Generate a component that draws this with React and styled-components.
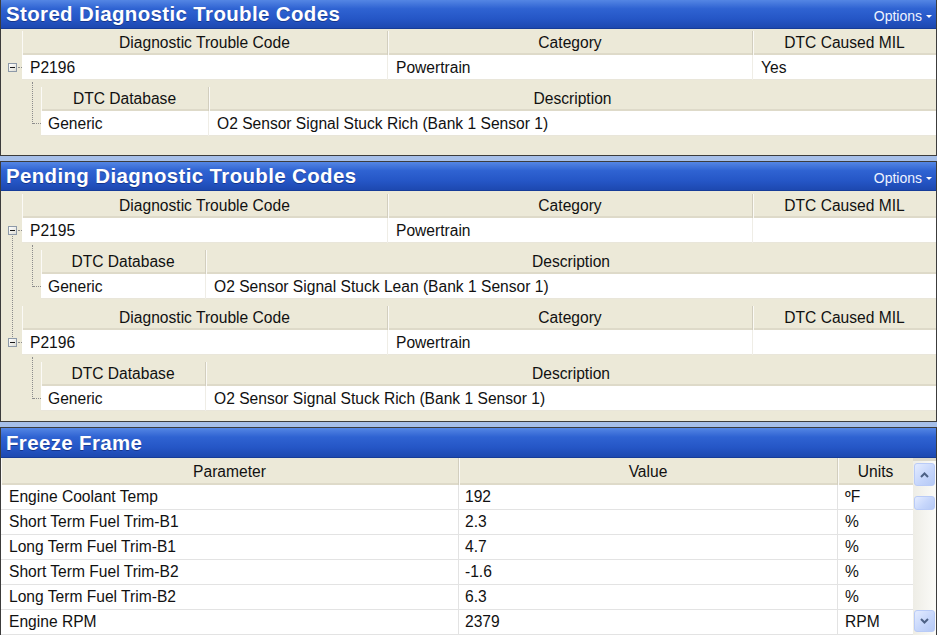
import React from 'react';
import styled, { createGlobalStyle, css } from 'styled-components';

const Global = createGlobalStyle`
  html, body { margin: 0; padding: 0; background: #a6bfe9; overflow: hidden; }
  body { font-family: "Liberation Sans", Arial, sans-serif; color: #111; }
  * { box-sizing: border-box; }
`;

const Page = styled.div`
  width: 937px;
  height: 635px;
  display: flex;
  flex-direction: column;
  gap: 5px;
  overflow: hidden;
`;

const Panel = styled.section`
  background: #ece9d8;
  border: 1px solid #3c3c3c;
  ${p => p.$first && css`border-top: none;`}
  ${p => p.$last && css`border-bottom: none; flex: 1 0 auto;`}
  display: flex;
  flex-direction: column;
  flex-shrink: 0;
`;

const TitleBar = styled.header`
  height: ${p => p.$h || 29}px;
  flex: none;
  display: flex;
  align-items: center;
  justify-content: space-between;
  padding: 0 4px 0 5px;
  background: linear-gradient(to bottom, #5486e4 0%, #2f63d2 30%, #2556c6 65%, #1c47ae 100%);
  box-shadow: inset 0 -1px 0 #163c98;
`;

const Title = styled.h2`
  margin: 0;
  font-size: 20.4px;
  font-weight: bold;
  letter-spacing: 0.4px;
  color: #fff;
  text-shadow: 0 1px 0 rgba(0, 0, 40, 0.35);
`;

const Options = styled.span`
  font-size: 14px;
  color: #eef3ff;
  display: flex;
  align-items: center;
  gap: 4px;
  padding-top: 2px;
  &::after {
    content: '';
    border-left: 3px solid transparent;
    border-right: 3px solid transparent;
    border-top: 3px solid #fff;
    margin-top: 1px;
  }
`;

const TreeBody = styled.div`
  height: ${p => p.$h}px;
  padding-top: ${p => p.$pt}px;
  flex: none;
`;

const Group = styled.div`
  position: relative;
  padding-bottom: 7px;
  ${p => p.$linkNext && css`
    &::before {
      content: '';
      position: absolute;
      left: 11px;
      top: 37px;
      height: 112px;
      border-left: 1px dotted #8c8c8c;
    }
  `}
`;

const HeaderGrid = styled.div`
  display: grid;
  grid-template-columns: ${p => p.$cols};
  height: ${p => p.$h || 24}px;
  margin-left: ${p => p.$indent || 0}px;
`;

const HeaderCell = styled.div`
  display: flex;
  align-items: center;
  justify-content: center;
  font-size: 15.6px;
  white-space: nowrap;
  border-right: 1px solid #d2cebe;
  box-shadow: inset 1px 0 0 #fbfaf6, inset 0 -2px 0 #dedac9;
  &:last-child { border-right: none; }
`;

const DataRow = styled.div`
  display: flex;
  height: 25px;
`;

const Gutter = styled.div`
  width: 21px;
  flex: none;
  display: flex;
  align-items: center;
  padding-left: 7px;
`;

const Expander = styled.span`
  width: 9px;
  height: 9px;
  flex: none;
  border: 1px solid #8d99a8;
  background: linear-gradient(135deg, #ffffff, #dcdcd4);
  display: flex;
  align-items: center;
  justify-content: center;
  position: relative;
  z-index: 1;
  &::before {
    content: '';
    width: 5px;
    height: 1px;
    background: #1a1a1a;
  }
`;

const Stub = styled.span`
  flex: 1;
  border-top: 1px dotted #8c8c8c;
  margin-left: 1px;
`;

const DataGrid = styled.div`
  flex: 1;
  display: grid;
  grid-template-columns: ${p => p.$cols};
  background: #fff;
  box-shadow: inset 0 -1px 0 #e9e6da;
`;

const DataCell = styled.div`
  display: flex;
  align-items: center;
  padding-left: ${p => p.$pl || 8}px;
  font-size: 15.6px;
  white-space: nowrap;
  border-right: 1px solid #efede6;
  &:last-child { border-right: none; }
`;

const Child = styled.div`
  display: flex;
`;

const ChildGutter = styled.div`
  width: 40px;
  flex: none;
  position: relative;
  &::before {
    content: '';
    position: absolute;
    left: 31px;
    top: 2px;
    bottom: 12px;
    border-left: 1px dotted #8c8c8c;
  }
  &::after {
    content: '';
    position: absolute;
    left: 32px;
    width: 8px;
    bottom: 12px;
    border-top: 1px dotted #8c8c8c;
  }
`;

const ChildTable = styled.div`
  flex: 1;
  padding-top: 7px;
`;

const FreezeBody = styled.div`
  flex: 1;
  display: flex;
  background: #fff;
`;

const FreezeTable = styled.div`
  flex: 1;
`;

const FreezeRow = styled.div`
  display: grid;
  grid-template-columns: 458px 379px 1fr;
  height: 25px;
  border-bottom: 1px solid #e3e3e3;
`;

const FreezeCell = styled.div`
  display: flex;
  align-items: center;
  padding-left: ${p => p.$pl}px;
  font-size: 15.6px;
  white-space: nowrap;
  border-right: 1px solid #e3e3e3;
  &:last-child { border-right: none; }
`;

const FreezeHead = styled(HeaderGrid)`
  background: #ece9d8;
`;

const Scrollbar = styled.div`
  width: 23px;
  flex: none;
  display: flex;
  flex-direction: column;
  align-items: center;
  padding: 5px 0 3px;
  background: linear-gradient(to right, #eeede6, #fbfbf8);
  box-shadow: inset 0 3px 0 #dcd9cc;
`;

const ScrollButton = styled.div`
  width: 21px;
  height: ${p => p.$h}px;
  flex: none;
  border: 1px solid #b9cbf7;
  border-radius: 3px;
  background: linear-gradient(135deg, #e4ecff 0%, #c6d6fb 55%, #b5c9f5 100%);
  display: flex;
  align-items: center;
  justify-content: center;
`;

const Thumb = styled(ScrollButton)`
  margin-top: 10px;
`;

const Spacer = styled.div`
  flex: 1;
`;

const Chevron = ({ down }) => (
  <svg width="9" height="6" viewBox="0 0 9 6">
    <path
      d={down ? 'M1 1 L4.5 4.5 L8 1' : 'M1 5 L4.5 1.5 L8 5'}
      fill="none"
      stroke="#4d6185"
      strokeWidth="2"
    />
  </svg>
);

const mainCols = '366px 365px 1fr';

function DtcGroup({ code, category, mil, desc, childCol, linkNext }) {
  const childCols = `${childCol}px 1fr`;
  return (
    <Group $linkNext={linkNext}>
      <HeaderGrid $cols={mainCols} $indent={21}>
        <HeaderCell>Diagnostic Trouble Code</HeaderCell>
        <HeaderCell>Category</HeaderCell>
        <HeaderCell>DTC Caused MIL</HeaderCell>
      </HeaderGrid>
      <DataRow>
        <Gutter>
          <Expander />
          <Stub />
        </Gutter>
        <DataGrid $cols={mainCols}>
          <DataCell>{code}</DataCell>
          <DataCell>{category}</DataCell>
          <DataCell>{mil}</DataCell>
        </DataGrid>
      </DataRow>
      <Child>
        <ChildGutter />
        <ChildTable>
          <HeaderGrid $cols={childCols}>
            <HeaderCell>DTC Database</HeaderCell>
            <HeaderCell>Description</HeaderCell>
          </HeaderGrid>
          <DataRow>
            <DataGrid $cols={childCols}>
              <DataCell $pl={7}>Generic</DataCell>
              <DataCell>{desc}</DataCell>
            </DataGrid>
          </DataRow>
        </ChildTable>
      </Child>
    </Group>
  );
}

const freeze = [
  ['Engine Coolant Temp', '192', 'ºF'],
  ['Short Term Fuel Trim-B1', '2.3', '%'],
  ['Long Term Fuel Trim-B1', '4.7', '%'],
  ['Short Term Fuel Trim-B2', '-1.6', '%'],
  ['Long Term Fuel Trim-B2', '6.3', '%'],
  ['Engine RPM', '2379', 'RPM'],
];

export default function App() {
  return (
    <>
      <Global />
      <Page>
        <Panel $first>
          <TitleBar>
            <Title>Stored Diagnostic Trouble Codes</Title>
            <Options>Options</Options>
          </TitleBar>
          <TreeBody $h={126} $pt={2}>
            <DtcGroup
              code="P2196"
              category="Powertrain"
              mil="Yes"
              desc="O2 Sensor Signal Stuck Rich (Bank 1 Sensor 1)"
              childCol={168}
            />
          </TreeBody>
        </Panel>

        <Panel>
          <TitleBar>
            <Title>Pending Diagnostic Trouble Codes</Title>
            <Options>Options</Options>
          </TitleBar>
          <TreeBody $h={230} $pt={3}>
            <DtcGroup
              code="P2195"
              category="Powertrain"
              mil=""
              desc="O2 Sensor Signal Stuck Lean (Bank 1 Sensor 1)"
              childCol={165}
              linkNext
            />
            <DtcGroup
              code="P2196"
              category="Powertrain"
              mil=""
              desc="O2 Sensor Signal Stuck Rich (Bank 1 Sensor 1)"
              childCol={165}
            />
          </TreeBody>
        </Panel>

        <Panel $last>
          <TitleBar $h={30}>
            <Title>Freeze Frame</Title>
          </TitleBar>
          <FreezeBody>
            <FreezeTable>
              <FreezeHead $cols="458px 379px 1fr" $h={27}>
                <HeaderCell>Parameter</HeaderCell>
                <HeaderCell>Value</HeaderCell>
                <HeaderCell>Units</HeaderCell>
              </FreezeHead>
              {freeze.map(([name, value, unit]) => (
                <FreezeRow key={name}>
                  <FreezeCell $pl={8}>{name}</FreezeCell>
                  <FreezeCell $pl={6}>{value}</FreezeCell>
                  <FreezeCell $pl={7}>{unit}</FreezeCell>
                </FreezeRow>
              ))}
            </FreezeTable>
            <Scrollbar>
              <ScrollButton $h={23}><Chevron /></ScrollButton>
              <Thumb $h={14} />
              <Spacer />
              <ScrollButton $h={22}><Chevron down /></ScrollButton>
            </Scrollbar>
          </FreezeBody>
        </Panel>
      </Page>
    </>
  );
}
